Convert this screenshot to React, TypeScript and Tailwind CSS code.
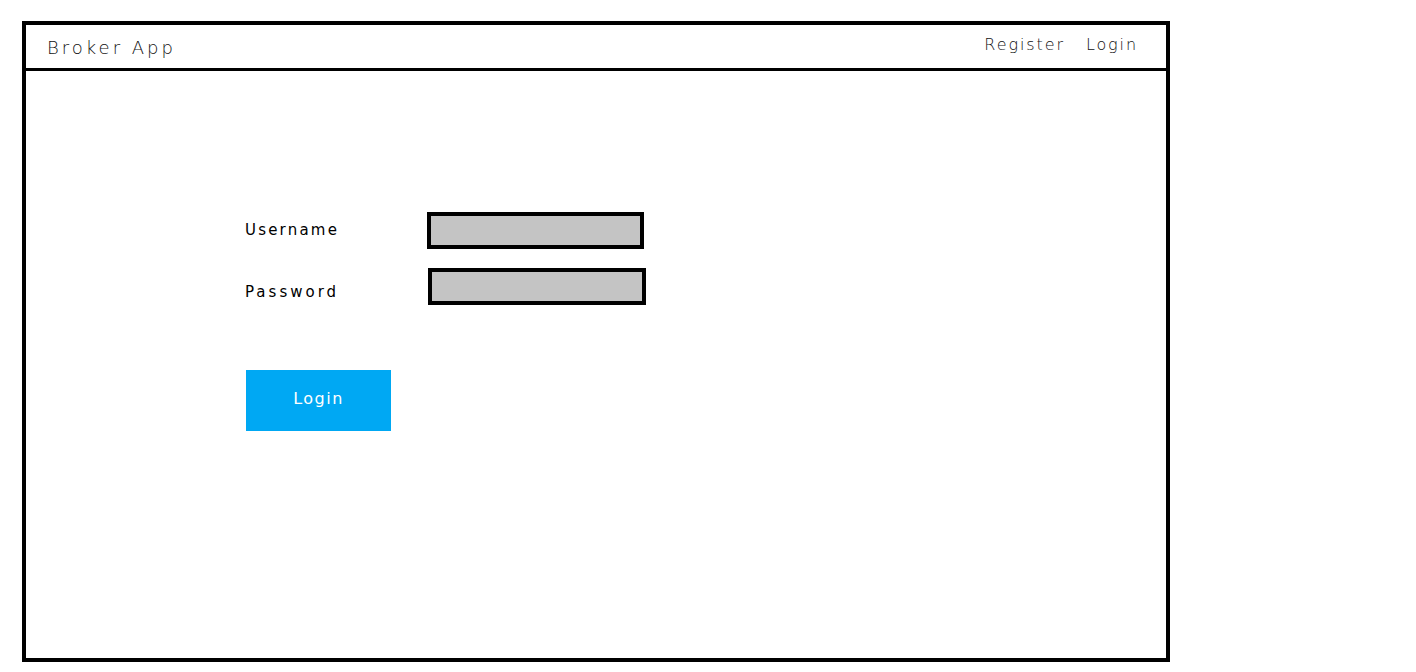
import React from "react";

export default function App() {
  return (
    <div className="w-[1416px] h-[672px] bg-white relative" style={{ fontFamily: '"DejaVu Sans", sans-serif' }}>
      <div className="pt-[21px] pl-[22px]">
        <div className="w-[1148px] h-[641px] border-4 border-black flex flex-col">
          <div className="h-[43px] flex items-center justify-between pl-[21px] pr-[28px]">
            <span className="text-[18px] font-extralight tracking-[3px] text-[#111] mt-[1px]">Broker App</span>
            <div className="flex gap-[21px] text-[16px] font-extralight tracking-[1.9px] text-[#111] -mt-[4px]">
              <span>Register</span>
              <span>Login</span>
            </div>
          </div>
          <div className="h-[3px] bg-black" />
          <div className="pl-[219px] pt-[141px]">
            <div className="grid grid-cols-[182px_219px] gap-y-[19px] items-center">
              <span className="text-[15px] tracking-[2.2px] text-black">Username</span>
              <div className="w-[217px] h-[37px] border-4 border-black bg-[#c4c4c4]" />
              <span className="text-[15px] tracking-[3px] text-black mt-[12px]">Password</span>
              <div className="w-[218px] h-[37px] border-4 border-black bg-[#c4c4c4] ml-[1px]" />
            </div>
            <button className="mt-[65px] ml-[1px] w-[145px] h-[61px] bg-[#00a8f3] text-white text-[16px] font-normal tracking-[1.5px] flex items-center justify-center pb-[3px]">
              Login
            </button>
          </div>
        </div>
      </div>
    </div>
  );
}
